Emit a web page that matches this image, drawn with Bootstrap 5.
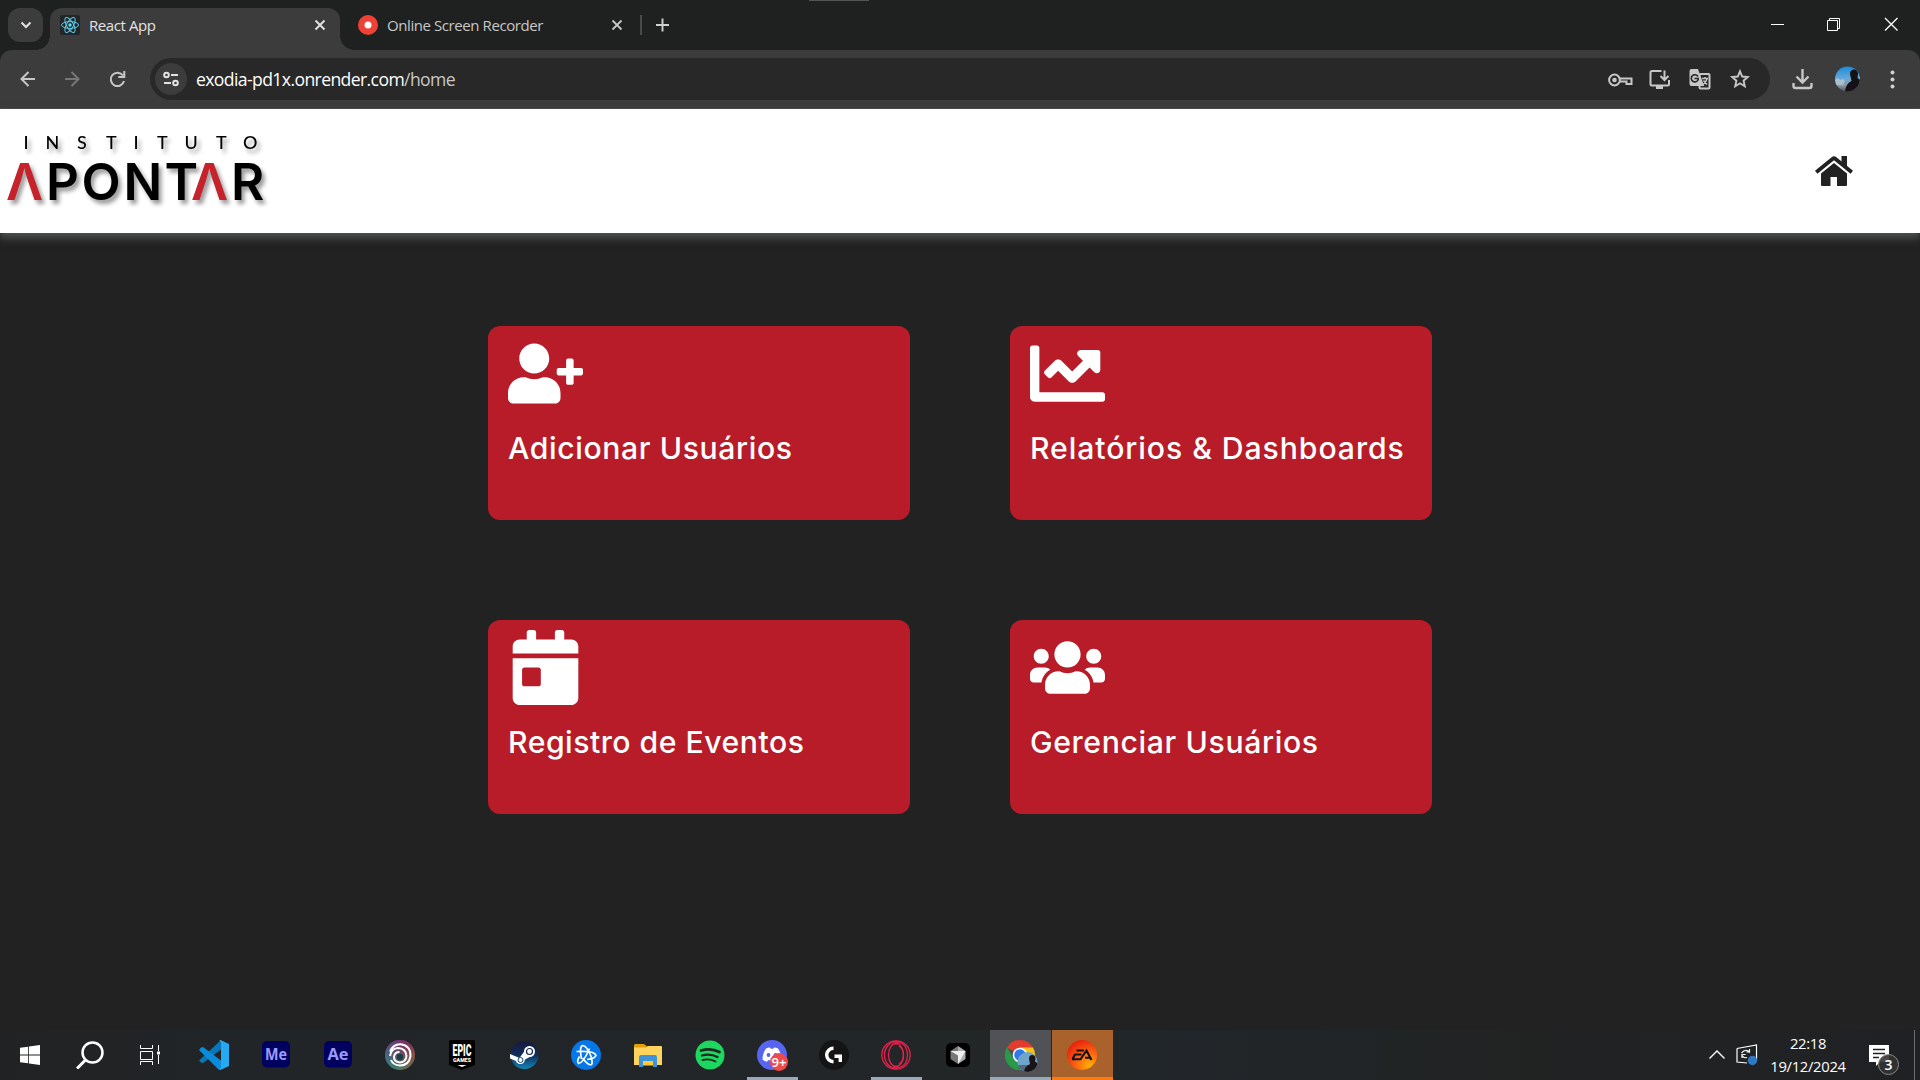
<!DOCTYPE html>
<html lang="pt-br">
<head>
<meta charset="utf-8">
<title>React App</title>
<link href="https://cdn.jsdelivr.net/npm/bootstrap@5.3.0/dist/css/bootstrap.min.css" rel="stylesheet">
<style>
html,body{height:100%;overflow:hidden}
body{background:#222;font-family:"Open Sans","Noto Sans",sans-serif;color:#e3e3e3}
svg{display:block;flex:none}
.tabstrip{height:50px;background:#1f2120}
.tabstrip .grip{left:809px;top:0;width:60px;height:1px;background:#555}
.tabmenu{width:35px;height:34px;margin:8px 7px 8px 8px;border-radius:12px;background:#3c3c3c}
.tab-on{width:290px;height:42px;margin-top:8px;padding:0 11px 8px 10px;border-radius:12px 12px 0 0;background:#3c3c3c}
.tab-on::before,.tab-on::after{content:"";position:absolute;bottom:0;width:14px;height:14px}
.tab-on::before{left:-14px;background:radial-gradient(circle at 0 0,transparent 13.5px,#3c3c3c 14px)}
.tab-on::after{right:-14px;background:radial-gradient(circle at 100% 0,transparent 13.5px,#3c3c3c 14px)}
.tab-off{width:300px;padding:0 15px 0 18px;height:50px}
.tabtext{font-size:15px;line-height:20px;letter-spacing:-.42px;white-space:nowrap;margin-left:9px}
.toolbar-row{height:59px;background:#3c3c3c;border-bottom:1px solid #4a4848;border-radius:12px 12px 0 0;padding-bottom:1px}
.under{background:#1f2120}
.omni{width:1620px;height:42px;border-radius:21px;background:#282828;padding:0 20px 0 5px}
.siteinfo{width:32px;height:32px;background:#3c3c3c}
.url{font-size:17.6px;letter-spacing:-.61px;line-height:24px;color:#fff;margin-left:9px}
.url span{color:#c7c7c7}
.site-head{height:124px;background:#fff;box-shadow:0 5px 8px #4d524f}
.board{height:797px;padding-top:93px}
.tiles{width:944px;gap:100px;grid-template-columns:422px 422px;grid-template-rows:194px 194px}
.tile{background:#b71c28;border-radius:12px;padding:10px 20px;color:#fff}
.tile h2{font:500 30.2px/40px Inter,sans-serif;margin:17px 0 0;white-space:nowrap}
.taskbar{height:50px;background:linear-gradient(90deg,#212223,#212528 12%,#232627 50%,#21262a 60%,#212323 80%,#202124)}
.sys{width:60px;height:50px}
.app{width:61px;height:50px;margin-right:1px;padding-right:1px}
.app i{position:absolute;bottom:0;left:5px;right:5px;height:3px;background:#9aa9b8}
.app.on{background:#505255}.app.on i{left:0;right:0}
.app.ea{background:#a9622b}.app.ea i{left:0;right:0;background:#ff7a09}
.clock{width:80px;font-size:14.8px;line-height:23px;letter-spacing:-.3px;color:#fff;margin:0 9px 0 5px}
.showdesk{width:6px;height:50px;border-left:1px solid #6c6c6c;margin-left:7px}
</style>
<script src="https://cdn.jsdelivr.net/npm/bootstrap@5.3.0/dist/js/bootstrap.bundle.min.js"></script>
</head>
<body class="d-flex flex-column">

<!-- browser tabs -->
<div class="tabstrip d-flex position-relative">
  <div class="grip position-absolute"></div>
  <div class="tabmenu d-flex align-items-center justify-content-center"><svg width="12" height="12" fill="none" stroke="#e3e3e3" stroke-width="2"><path d="M1.500 3.500 6 8l4.500-4.500"/></svg></div>
  <div class="tab-on position-relative d-flex align-items-center">
    <svg width="20" height="20" viewBox="0 0 20 20"><rect width="20" height="20" rx="2" fill="#222628"/><g fill="none" stroke="#5ccde8" stroke-width="1"><ellipse cx="10" cy="10" rx="8.500" ry="3.400"/><ellipse cx="10" cy="10" rx="8.500" ry="3.400" transform="rotate(60 10 10)"/><ellipse cx="10" cy="10" rx="8.500" ry="3.400" transform="rotate(120 10 10)"/></g><circle cx="10" cy="10" r="1.700" fill="#61dafb"/></svg>
    <span class="tabtext">React App</span>
    <svg class="ms-auto" width="18" height="12" fill="none" stroke="#e3e3e3" stroke-width="1.900"><path d="m4.500 1.500 9 9m0-9-9 9"/></svg>
  </div>
  <div class="tab-off d-flex align-items-center">
    <svg width="20" height="20"><circle cx="10" cy="10" r="10" fill="#ef4136"/><circle cx="10" cy="10" r="3.500" fill="#fff"/></svg>
    <span class="tabtext" style="color:#c7c7c7">Online Screen Recorder</span>
    <svg class="ms-auto" width="16" height="12" fill="none" stroke="#c7c7c7" stroke-width="1.800"><path d="m3.500 1.500 9 9m0-9-9 9"/></svg>
  </div>
  <svg width="40" height="50" fill="none"><path d="M1 15v20" stroke="#4a4a4a" stroke-width="2"/><path d="M22.500 18.500v13M16 25h13" stroke="#d0d0d0" stroke-width="1.900"/></svg>
  <svg class="ms-auto" width="171" height="50" fill="none" stroke="#fff"><path d="M22 24.500h13M78.500 20.500h10v10h-10zM80.500 20v-1.500h10v10H89"/><path stroke-width="1.300" d="M136 18l12.500 12.500M148.500 18 136 30.500"/></svg>
</div>

<!-- navigation toolbar -->
<div class="under"><div class="toolbar-row d-flex align-items-center">
  <svg width="150" height="42" fill="none" stroke="#c7c7c7" stroke-width="2"><path d="M35 21H21.500m7-7-7 7 7 7"/><path stroke="#777" d="M65 21h13.500m-7-7 7 7-7 7"/><path d="M123 17.500a6.700 6.700 0 1 0 1 5.500M124.300 13v6h-6"/></svg>
  <div class="omni d-flex align-items-center">
    <div class="siteinfo rounded-circle d-flex align-items-center justify-content-center"><svg width="18" height="18" fill="none" stroke="#e3e3e3" stroke-width="2"><circle cx="4.500" cy="5" r="2.300"/><path d="M9 5h7M2 13h7"/><circle cx="13.500" cy="13" r="2.300"/></svg></div>
    <div class="url">exodia-pd1x.onrender.com<span>/home</span></div>
    <svg class="ms-auto" width="142" height="42" fill="none" stroke="#c7c7c7" stroke-width="2">
      <circle cx="6.500" cy="22" r="5.400"/><circle cx="6.500" cy="22" r="2.300" fill="#c7c7c7" stroke="none"/><path d="M12 20.500h11.500v5.500h-5v-2.500H12" />
      <path d="M53.500 13h-9.500q-1.500 0-1.500 1.500v11.500q0 1.500 1.500 1.500h15.500q1.500 0 1.500-1.500v-4M56.500 12.500v9M52.500 18l4 4 4-4"/><path d="M48 29.500h7" stroke-width="3"/>
      <rect x="91.500" y="16" width="10" height="14.500" rx="1"/><path stroke="none" fill="#c7c7c7" d="M83.500 11h6.500l1.200 3.500 5 13.500H83.500a2 2 0 0 1-2-2V13a2 2 0 0 1 2-2z"/><path d="M90 18.500a3.600 3.600 0 1 0 .2 3.200v-1.200H86.500" stroke="#282828" stroke-width="1.600"/><path d="M94 20.500h6M97 19v1.500M99 21q-1.500 4-4 5.500M95.500 22.500l3.500 4" stroke-width="1.400"/>
      <path transform="translate(-.5 0)" stroke-linejoin="miter" stroke-width="1.900" d="m132.500 13.300 2.200 5.200 5.600.5-4.200 3.700 1.200 5.500-4.800-2.900-4.800 2.900 1.200-5.500-4.200-3.700 5.600-.5z"/>
    </svg>
  </div>
  <svg width="150" height="46" fill="none">
    <path d="M32.500 14v13.500M26.500 21.500l6 6 6-6M23.500 28v3q0 2 2 2h14q2 0 2-2v-3" transform="translate(0 -1)" stroke="#c7c7c7" stroke-width="2.400"/>
    <defs><linearGradient id="sky" x2="0" y2="1"><stop stop-color="#168be0"/><stop offset=".5" stop-color="#6aa9d5"/><stop offset=".75" stop-color="#8d98a0"/><stop offset="1" stop-color="#3b5263"/></linearGradient><clipPath id="av"><circle cx="77.500" cy="23" r="12.500"/></clipPath></defs>
    <g clip-path="url(#av)"><path fill="url(#sky)" d="M65 10h25v26H65z"/><path fill="#c9d3d8" opacity=".6" d="M65 24l3-2 2 2 3-1 2 2-2 4h-8z"/><path fill="#161116" d="M80 18q0-4.500 4-4.500t4 4.500l-.5 4 3 2v13H75q0-9 6.500-12z"/></g>
    <g fill="#d0d0d0"><circle cx="122.500" cy="16.500" r="2"/><circle cx="122.500" cy="23.500" r="2"/><circle cx="122.500" cy="30.500" r="2"/></g>
  </svg>
</div></div>

<!-- site header -->
<header class="site-head d-flex align-items-start justify-content-between position-relative">
  <svg width="280" height="124" style="filter:drop-shadow(3px 4px 2px rgba(0,0,0,.4))" font-family="Inter,sans-serif">
    <text y="40" font-family="Lato,sans-serif" font-size="18" font-weight="500" x="23.500 45.500 77 106 133.500 157 184.500 216 243">INSTITUTO</text>
    <text y="91" font-size="51" font-weight="600"><tspan x="6" fill="#c5222b">Λ</tspan><tspan x="46 81.500 123.500 164.500">PONT</tspan><tspan x="191" fill="#c5222b">Λ</tspan><tspan x="231">R</tspan></text>
  </svg>
  <svg width="38" height="30" viewBox="0 0 38 30" style="margin:47px 67px 0 0"><path fill="#222" d="M6 17.500 19 7l13 10.500V29q0 1-1 1h-9v-9h-6.500v9H7q-1 0-1-1z"/><path fill="none" stroke="#222" stroke-width="3.800" d="M1.200 16.300 17.800 2.700q1.200-1 2.400 0l16.600 13.600"/><path fill="#222" d="M26.500 0H32v12l-5.500-4.500z"/></svg>
</header>

<main class="board d-flex justify-content-center">
  <div class="tiles d-grid align-content-start">
    <div class="tile"><svg width="75" height="75" viewBox="0 0 640 512" fill="#fff"><path d="M624 208h-64v-64c0-8.800-7.200-16-16-16h-32c-8.800 0-16 7.200-16 16v64h-64c-8.800 0-16 7.200-16 16v32c0 8.800 7.200 16 16 16h64v64c0 8.800 7.200 16 16 16h32c8.800 0 16-7.200 16-16v-64h64c8.800 0 16-7.200 16-16v-32c0-8.800-7.200-16-16-16zm-400 48c70.700 0 128-57.300 128-128S294.700 0 224 0 96 57.300 96 128s57.300 128 128 128zm89.600 32h-16.700c-22.200 10.200-46.900 16-72.900 16s-50.600-5.800-72.900-16h-16.700C60.200 288 0 348.200 0 422.400V464c0 26.500 21.500 48 48 48h352c26.500 0 48-21.500 48-48v-41.600c0-74.200-60.200-134.400-134.400-134.400z"/></svg><h2 style="letter-spacing:.6px">Adicionar Usuários</h2></div>
    <div class="tile"><svg width="75" height="75" viewBox="0 0 512 512" fill="#fff"><path d="M496 384H64V80c0-8.840-7.160-16-16-16H16C7.160 64 0 71.160 0 80v336c0 17.670 14.330 32 32 32h464c8.840 0 16-7.160 16-16v-32c0-8.840-7.160-16-16-16zM464 96H345.940c-21.380 0-32.090 25.850-16.970 40.970l32.400 32.400L288 242.750l-73.370-73.370c-12.500-12.500-32.760-12.500-45.250 0l-68.690 68.690c-6.250 6.250-6.250 16.380 0 22.630l22.620 22.620c6.250 6.250 16.380 6.250 22.630 0L192 237.250l73.370 73.370c12.500 12.500 32.760 12.500 45.250 0l96-96 32.400 32.400c15.120 15.120 40.970 4.410 40.970-16.970V112c.010-8.840-7.150-16-15.990-16z"/></svg><h2 style="letter-spacing:.92px">Relatórios &amp; Dashboards</h2></div>
    <div class="tile"><svg width="75" height="75" viewBox="0 0 448 512" fill="#fff"><path d="M0 464c0 26.500 21.500 48 48 48h352c26.500 0 48-21.500 48-48V192H0v272zm64-192c0-8.800 7.200-16 16-16h96c8.800 0 16 7.200 16 16v96c0 8.800-7.200 16-16 16H80c-8.800 0-16-7.200-16-16v-96zM400 64h-48V16c0-8.800-7.200-16-16-16h-32c-8.800 0-16 7.200-16 16v48H160V16c0-8.800-7.200-16-16-16h-32c-8.800 0-16 7.200-16 16v48H48C21.500 64 0 85.500 0 112v48h448v-48c0-26.500-21.500-48-48-48z"/></svg><h2 style="letter-spacing:.5px">Registro de Eventos</h2></div>
    <div class="tile"><svg width="75" height="75" viewBox="0 0 640 512" fill="#fff"><path d="M96 224c35.300 0 64-28.700 64-64s-28.700-64-64-64-64 28.700-64 64 28.700 64 64 64zm448 0c35.300 0 64-28.700 64-64s-28.700-64-64-64-64 28.700-64 64 28.700 64 64 64zm32 32h-64c-17.600 0-33.500 7.100-45.100 18.600 40.300 22.100 68.900 62 75.100 109.400h66c17.700 0 32-14.300 32-32v-32c0-35.300-28.700-64-64-64zm-256 0c61.900 0 112-50.100 112-112S381.900 32 320 32 208 82.100 208 144s50.100 112 112 112zm76.800 32h-8.300c-20.800 10-43.900 16-68.500 16s-47.600-6-68.500-16h-8.300C179.600 288 128 339.600 128 403.200V432c0 26.500 21.500 48 48 48h288c26.500 0 48-21.500 48-48v-28.800c0-63.600-51.600-115.200-115.200-115.200zm-223.700-13.400C161.500 263.100 145.600 256 128 256H64c-35.300 0-64 28.700-64 64v32c0 17.700 14.300 32 32 32h65.900c6.300-47.400 34.900-87.300 75.200-109.400z"/></svg><h2 style="letter-spacing:.64px">Gerenciar Usuários</h2></div>
  </div>
</main>

<!-- Windows taskbar -->
<footer class="taskbar d-flex align-items-center">
  <div class="sys d-flex align-items-center justify-content-center"><svg width="20" height="20" fill="#fff"><path d="m0 2.800 8.200-1.100v7.900H0zM9 1.600 20 0v9.600H9zM0 10.400h8.200v7.900L0 17.200zM9 10.400h11V20L9 18.400z"/></svg></div>
  <div class="sys d-flex align-items-center justify-content-center"><svg width="28" height="28" fill="none" stroke="#fff"><circle cx="16.500" cy="11.500" r="10" stroke-width="2.500"/><path d="m9.500 19-8.500 8.500" stroke-width="3"/></svg></div>
  <div class="sys d-flex align-items-center justify-content-center me-1"><svg width="20" height="20" fill="none" stroke="#fff"><path d="M.5 0v3.500h12V0M.5 6.500h12v8H.5zM.5 20v-3.500h12V20M18.500 0v6M18.500 10v9"/><path d="M17 6.500h3v3h-3z" fill="#fff" stroke="none"/></svg></div>

  <div class="app d-flex align-items-center justify-content-center"><svg width="30" height="30"><path fill="#0877b9" d="M0 20.500 20 2l2 .5v7L4 23q-1 .5-2-.5z"/><path fill="#0b8cdb" d="m2 7.500 2-.5 18 13.500v7L20 30 0 10z"/><path fill="#27a9f2" d="m21.500 0 8.500 4v22l-8.500 4-1.500-1 2-1.500v-25L20 1z"/></svg></div>
  <div class="app d-flex align-items-center justify-content-center"><svg width="28" height="28" font-family="Open Sans,sans-serif"><rect width="28" height="26.500" rx="5" fill="#00005f"/><text x="14" y="18.500" text-anchor="middle" font-size="15.500" font-weight="700" textLength="22" lengthAdjust="spacingAndGlyphs" fill="#9b9bff">Me</text></svg></div>
  <div class="app d-flex align-items-center justify-content-center"><svg width="28" height="28" font-family="Open Sans,sans-serif"><rect width="28" height="26.500" rx="5" fill="#00005f"/><text x="14" y="18.500" text-anchor="middle" font-size="15.500" font-weight="700" textLength="21" lengthAdjust="spacingAndGlyphs" fill="#9b9bff">Ae</text></svg></div>
  <div class="app d-flex align-items-center justify-content-center"><svg width="30" height="30"><defs><linearGradient id="ub" x2="1" y2="1"><stop stop-color="#3b37b8"/><stop offset=".4" stop-color="#603872"/><stop offset=".7" stop-color="#6d6640"/><stop offset="1" stop-color="#a06a25"/></linearGradient><linearGradient id="ub2" x1="1" y1="0" x2="0" y2="1"><stop offset=".2" stop-color="#b0264a" stop-opacity=".6"/><stop offset=".9" stop-color="#16a38b"/></linearGradient></defs><circle cx="15" cy="15" r="15" fill="url(#ub)"/><circle cx="15" cy="15" r="15" fill="url(#ub2)" opacity=".7"/><path fill="none" stroke="#fff" stroke-width="2" d="M5 11.500Q8 4 15.500 4.200 25.800 5.500 25.500 16 24 25.500 15 25.500 8 25 6 20M5 16Q6 8.500 13 8q8 .5 8.500 8-.5 6-6.500 6.500Q9 22 9 17q.5-5 5.500-5"/><circle cx="15" cy="17" r="3.200" fill="#193c49"/></svg></div>
  <div class="app d-flex align-items-center justify-content-center"><svg width="26" height="30" font-family="Roboto,sans-serif" font-weight="900" fill="#fff" text-anchor="middle"><path fill="#000" d="M2 0h22q2 0 2 2v23l-13 5L0 25V2q0-2 2-2z"/><text x="13" y="15.500" font-size="16.500" textLength="19" lengthAdjust="spacingAndGlyphs">EPIC</text><text x="13" y="22" font-size="5.500" textLength="18" lengthAdjust="spacingAndGlyphs">GAMES</text><path d="M8.500 25h9L13 27z"/></svg></div>
  <div class="app d-flex align-items-center justify-content-center"><svg width="30" height="30"><defs><linearGradient id="st" x2="0" y2="1"><stop stop-color="#171a3c"/><stop offset=".5" stop-color="#102a5c"/><stop offset="1" stop-color="#1387b8"/></linearGradient></defs><circle cx="15.500" cy="15" r="14" fill="url(#st)"/><path fill="#fff" d="m1 14 9.500 4 5-7 9 4-8.500 4.500q-1 5-5 4.500-3.500-.5-4-3L1 18.500z"/><circle cx="20.500" cy="11.500" r="5.500" fill="#fff"/><circle cx="20.500" cy="11.500" r="3" fill="#fff" stroke="#14264e" stroke-width="1.200"/><circle cx="11.500" cy="20" r="2.500" fill="none" stroke="#17487a"/></svg></div>
  <div class="app d-flex align-items-center justify-content-center"><svg width="30" height="30"><circle cx="15" cy="15" r="15" fill="#0577e8"/><g fill="none" stroke="#fff" stroke-width="1.700"><path d="M10.500 19Q8 5.500 12 5.500q4 .5 8.500 12"/><path d="M5.500 11.500Q24 10.500 25 15.500q-1 3-9 4"/><path d="M18.500 8.500Q12.500 23 7.500 23.500q-2-2 1-7M11.500 18q6 8 9 6.500 1.500-2-.5-7"/></g></svg></div>
  <div class="app d-flex align-items-center justify-content-center"><svg width="28" height="24"><path fill="#e2a008" d="M1 1h9l3 2.500h12V8H0V2z"/><path fill="#ffd45e" d="M0 4.500h12L14 3h13q1 0 1 1v18H0z"/><path fill="#3e94d8" d="M5 24V14q0-2 2-2h14q2 0 2 2v10h-4v-6H9v6z"/><path fill="#ffc93e" d="M9 18h10v4.500H9z"/></svg></div>
  <div class="app d-flex align-items-center justify-content-center"><svg width="30" height="30"><circle cx="15" cy="15" r="14.500" fill="#1ed760"/><g fill="none" stroke="#1b2a20" stroke-linecap="round"><path d="M6 10.500q10-3 18.500 1.500" stroke-width="2.700"/><path d="M7 15.500q8-2.500 15.500 1.500" stroke-width="2.300"/><path d="M7.500 20q7-1.800 13 1.500" stroke-width="1.900"/></g></svg></div>
  <div class="app position-relative d-flex align-items-center justify-content-center"><svg width="32" height="32" viewBox="-1 -1 32 32" overflow="visible"><circle cx="15" cy="15" r="15" fill="#5865f2"/><path fill="#fff" d="M9 8.500q3-1.500 4-1l.7 1.200h2.600L17 7.500q2 0 4 1 3.500 5 3.300 11-2 2-4.300 2.200L18.700 20q-3.700 1-7.400 0L10 21.700Q7.500 21.500 5.500 19.500 5.500 13.500 9 8.500z"/><g fill="#5865f2"><circle cx="11.500" cy="15" r="1.900"/><circle cx="18.500" cy="15" r="1.900"/></g><circle cx="22" cy="22" r="9" fill="#ed4b4b"/><text x="22" y="26.500" text-anchor="middle" font-size="13" font-weight="600" fill="#fff" textLength="15" lengthAdjust="spacingAndGlyphs">9+</text></svg><i></i></div>
  <div class="app d-flex align-items-center justify-content-center"><svg width="30" height="30"><circle cx="15" cy="15" r="15" fill="#141414"/><path fill="none" stroke="#fff" stroke-width="3.400" d="M14.500 8.200a6.800 6.800 0 1 0 0 13.600M15.500 16.200h5.800V22"/></svg></div>
  <div class="app position-relative d-flex align-items-center justify-content-center"><svg width="30" height="30" fill="none" stroke="#e8204c" stroke-width="1.300"><circle cx="15" cy="15" r="14.200"/><ellipse cx="15" cy="15" rx="7.500" ry="11.500"/><path d="M16 1.200C8 2 3.500 8 3.500 15S8 28 16 28.800M12.500 3.500Q20 0 24.500 7q4 8 0 16-4.500 6.500-12 3.500M18 6q4.500 2.500 4.500 9T18 24"/></svg><i></i></div>
  <div class="app d-flex align-items-center justify-content-center"><svg width="24" height="24"><rect width="24" height="24" rx="5" fill="#000"/><path fill="#777" d="M12 3 4.500 8v8L12 21z"/><path fill="#aaa" d="m12 3 7.500 5v8L12 21z"/><path fill="#eee" d="M4.500 8h15L12 21v-8.500z"/></svg></div>
  <div class="app on position-relative d-flex align-items-center justify-content-center"><svg width="32" height="32" viewBox="-1 -1 32 32" overflow="visible"><path fill="#e33b2e" d="M15 15 2 7.500a15 15 0 0 1 26 0z"/><path fill="#2a9a48" d="M15 30A15 15 0 0 1 2 7.500L8.500 19z"/><path fill="#fbc116" d="M15 30 21.500 18 15 7.500h13A15 15 0 0 1 15 30z"/><path fill="#2a9a48" d="M2 7.500 8.500 19l6.500 2-2 9A15 15 0 0 1 2 7.500z"/><circle cx="15" cy="15" r="7.300" fill="#fff"/><circle cx="15" cy="15" r="5.800" fill="#3079e8"/><defs><clipPath id="av2"><circle cx="22.500" cy="22" r="10"/></clipPath></defs><g clip-path="url(#av2)"><path fill="#6fa5c9" d="M12 12h21v21H12z"/><path fill="#506a79" d="M12 25h21v8H12z"/><path fill="#191417" d="M24 18.500q0-3.500 3.200-3.500t3.300 3.500l-.5 3 3 2V33H19q0-6 6-9z"/></g></svg><i></i></div>
  <div class="app ea position-relative d-flex align-items-center justify-content-center"><svg width="30" height="30"><defs><radialGradient id="ea" cx=".75" cy=".85" r=".9"><stop stop-color="#ffb000"/><stop offset=".45" stop-color="#ff6a12"/><stop offset="1" stop-color="#e8230c"/></radialGradient></defs><circle cx="15" cy="15" r="15" fill="url(#ea)"/><path fill="none" stroke="#161010" stroke-width="2.100" d="M9.500 10.500h7.500M7.500 14.500h7M5 19.300h8.500L19.500 10.500l5 9.500M8 14.500 5.500 19M18 17.800h5"/></svg><i></i></div>

  <div class="ms-auto d-flex align-items-center">
    <svg width="64" height="50" fill="none" stroke="#fff"><path d="m10.500 28.500 7.500-7.500 7.500 7.500" stroke-width="1.400"/><path d="M38 18.500 57.500 15v15M38 18.500v13.500l10 1" stroke-width="1.200"/><path d="M42.500 23q4-4.500 8-1v-3M51 22h-3.500M43 28v-3.500h3.500M43 25.500q2 3 5 2" stroke-width="1.200"/><circle cx="53.500" cy="30.500" r="4.700" fill="#2f78c4" stroke="none"/></svg>
    <div class="clock text-center">22:18<br>19/12/2024</div>
    <svg width="50" height="50"><path fill="#fff" d="M17 15h20v17h-9l-4 4v-4h-7z" transform="translate(-5 0)"/><path stroke="#222" stroke-width="1.300" d="M16 19.500h12M16 23.500h12M16 27.500h6"/><circle cx="31.500" cy="34.500" r="10" fill="#333" fill-opacity=".9" stroke="#8a8a8a"/><text x="31.500" y="39.500" text-anchor="middle" font-size="14" font-weight="600" fill="#fff">3</text></svg>
    <div class="showdesk"></div>
  </div>
</footer>
</body>
</html>
